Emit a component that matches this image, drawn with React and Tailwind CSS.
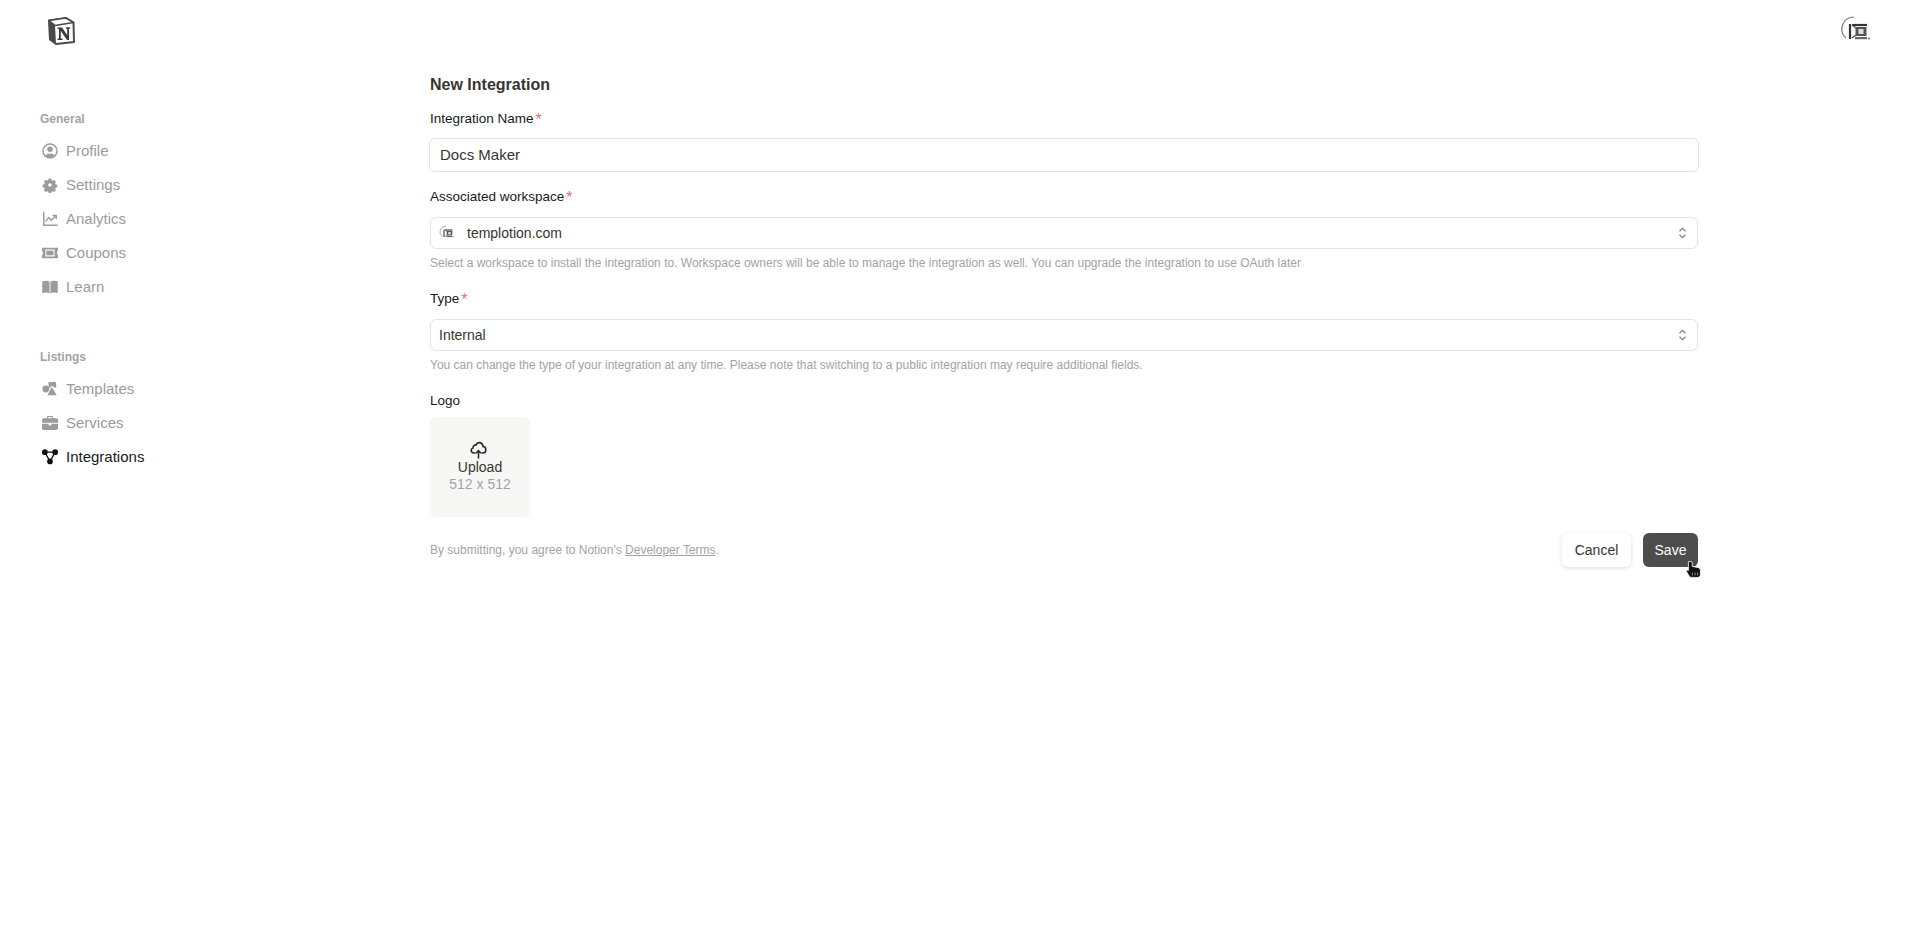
import React from "react";

const CubeLogo = () => (
  <svg width="29" height="30" viewBox="0 0 29 30" fill="none">
    <path d="M2 4.5 L19 2 L26.5 6.5 L27 26 L9 28 L3 23.5 Z" fill="#fff" stroke="#4a4a4a" strokeWidth="2" strokeLinejoin="round" />
    <path d="M2 4.5 L8 9.5 L9 28 L3 23.5 Z" fill="#4a4a4a" />
    <path d="M8 9.5 L26.5 6.5 L19 2 L2 4.5 Z" fill="#fff" stroke="#4a4a4a" strokeWidth="1.6" strokeLinejoin="round" />
    <path d="M10.5 11.5 H15 L20.2 19 V12.8 L18.8 12.5 V11.2 H23.2 V12.5 L22 12.8 V24 H20 L13.8 15 V22.3 L15.6 22.7 V24 H10.5 V22.7 L12 22.3 V12.9 L10.5 12.7 Z" fill="#3d3d3d" />
  </svg>
);

const Avatar = ({ small }) => (
  <svg width={small ? 16 : 32} height={small ? 16 : 32} viewBox="0 0 32 32" fill="none">
    <circle cx="16" cy="16" r="16" fill="#fff" />
    <path d="M14 2 A12 12 0 0 0 6 23" stroke="#777" strokeWidth="1.2" />
    <path d="M10 9 V24" stroke="#333" strokeWidth="2.2" />
    <path d="M12 10 H27" stroke="#333" strokeWidth="2.2" />
    <path d="M12 10 L16 13 M12 23 L16 20" stroke="#555" strokeWidth="1.4" />
    <rect x="15.5" y="12" width="11" height="9" fill="#555" />
    <rect x="18.5" y="14" width="5" height="5" fill="#ddd" />
    <rect x="15" y="22" width="12" height="2.2" fill="#666" />
    <circle cx="29" cy="23.5" r="0.9" fill="#555" />
  </svg>
);

const ProfileIcon = () => (
  <svg width="16" height="16" viewBox="0 0 18 18" fill="none">
    <circle cx="9" cy="9" r="7.9" stroke="currentColor" strokeWidth="1.6" />
    <circle cx="9" cy="7" r="3.1" fill="currentColor" />
    <path d="M3.6 14 C5 11 13 11 14.4 14 C12.5 16.6 5.5 16.6 3.6 14 Z" fill="currentColor" />
  </svg>
);

const GearIcon = () => (
  <svg width="16" height="16" viewBox="0 0 18 18">
    <path fillRule="evenodd" fill="currentColor" d="M7.4 1.5 h3.2 l.4 2 1.3.6 1.8-1 2.2 2.3-1 1.7.5 1.4 2 .4 v3.2 l-2 .4-.5 1.3 1 1.8-2.2 2.2-1.8-1-1.3.5-.4 1.9 H7.4 l-.4-1.9-1.3-.5-1.8 1-2.2-2.2 1-1.8-.5-1.3-2-.4 V8.6 l2-.4.5-1.4-1-1.7 2.2-2.3 1.8 1 1.3-.6 Z M9 7 a2.2 2.2 0 1 0 0 4.4 a2.2 2.2 0 1 0 0-4.4 Z" transform="translate(.6 .4) scale(.93)" />
  </svg>
);

const ChartIcon = () => (
  <svg width="16" height="16" viewBox="0 0 18 18" fill="none" stroke="currentColor" strokeWidth="1.6">
    <path d="M2 .8 V16 H17.5" />
    <path d="M4 12 L7.5 7.5 L10.5 10.5 L15.5 5.5" />
    <path d="M12 5 H16 V9" />
  </svg>
);

const TicketIcon = () => (
  <svg width="16" height="16" viewBox="0 0 18 18">
    <path fillRule="evenodd" fill="currentColor" d="M0 3 H18 V6.6 C16.6 7.2 16.6 10.8 18 11.4 V15 H0 V11.4 C1.4 10.8 1.4 7.2 0 6.6 Z M3.8 5.2 V12.8 H14.2 V5.2 Z" />
    <rect x="5" y="6.4" width="8" height="5.2" fill="currentColor" />
  </svg>
);

const BookIcon = () => (
  <svg width="16" height="16" viewBox="0 0 18 18" fill="currentColor">
    <path d="M.3 2.6 C3.2 1.6 6.6 1.9 8.5 3.2 V16.4 C6.6 15 3.2 14.8 .3 15.8 Z" />
    <path d="M17.7 2.6 C14.8 1.6 11.4 1.9 9.5 3.2 V16.4 C11.4 15 14.8 14.8 17.7 15.8 Z" />
  </svg>
);

const ShapesIcon = () => (
  <svg width="16" height="16" viewBox="0 0 18 18" fill="currentColor">
    <path d="M7 1.5 L15.5 .8 L16.2 8 L11 6 L8 8 Z" />
    <circle cx="4.4" cy="9" r="3.9" />
    <path d="M10.8 5.5 L17.4 16.6 H5.4 Z" stroke="#fff" strokeWidth="1" />
  </svg>
);

const BriefcaseIcon = () => (
  <svg width="16" height="16" viewBox="0 0 18 18">
    <path fill="currentColor" fillRule="evenodd" d="M5.6 3.6 V2 C5.6 1.4 6 1 6.6 1 H11.4 C12 1 12.4 1.4 12.4 2 V3.6 H15.8 C17 3.6 18 4.5 18 5.6 V8.6 H0 V5.6 C0 4.5 1 3.6 2.2 3.6 Z M7 2.3 V3.6 H11 V2.3 Z" />
    <path fill="currentColor" d="M0 9.8 H7.4 V11.4 H10.6 V9.8 H18 V15 C18 16 17 16.8 15.8 16.8 H2.2 C1 16.8 0 16 0 15 Z" />
  </svg>
);

const NodesIcon = () => (
  <svg width="16" height="16" viewBox="0 0 18 18" fill="#111">
    <path d="M3.2 3.6 H14.8 M3.2 3.6 L9 14 M14.8 3.6 L9 14" stroke="#111" strokeWidth="1.5" fill="none" />
    <circle cx="3.2" cy="3.6" r="3.2" />
    <circle cx="14.8" cy="3.6" r="3.2" />
    <circle cx="9" cy="14" r="3.2" />
  </svg>
);

const Chevrons = () => (
  <svg width="9" height="12" viewBox="0 0 10 14" fill="none" stroke="#808080" strokeWidth="1.5">
    <path d="M1.5 5 L5 1.5 L8.5 5" />
    <path d="M1.5 9 L5 12.5 L8.5 9" />
  </svg>
);

const CloudUpload = () => (
  <svg width="17" height="18" viewBox="0 0 17 18" fill="none" stroke="#2b2b2b" strokeWidth="1.6">
    <path d="M5.6 12 H4 C.8 12 .2 8 3 7 C3 4.4 5 3.6 6 4 C7.4 .4 12.6 .8 13 5.4 C16.8 5.8 16.8 12 13 12 H11.4" />
    <path d="M8.5 17.6 V10" />
    <path d="M6 12.2 L8.5 9.6 L11 12.2" />
  </svg>
);

const Pointer = () => (
  <svg width="15" height="17" viewBox="0 0 15 17">
    <path d="M2.6 .6 H5.4 C6 .6 6.2 1 6.2 1.6 V5.4 L11.5 6.4 C13.4 6.8 14.4 7.8 14.4 9.4 V13.6 C14.4 15.4 13.4 16.4 11.8 16.4 H5.4 C4.2 16.4 3.6 15.6 2.8 14.4 L.6 10.8 C.2 9.6 1.2 8.6 2.2 9.2 L2.4 9.4 V1 Z" fill="#111" stroke="#fff" strokeWidth=".8" />
    <path d="M6.4 14.4 V11.6 M9 14.4 V11.6 M11.6 14.4 V11.6" stroke="#aaa" strokeWidth=".8" />
  </svg>
);

const generalLinks = [
  { name: "Profile", icon: <ProfileIcon /> },
  { name: "Settings", icon: <GearIcon /> },
  { name: "Analytics", icon: <ChartIcon /> },
  { name: "Coupons", icon: <TicketIcon /> },
  { name: "Learn", icon: <BookIcon /> },
];

const listingLinks = [
  { name: "Templates", icon: <ShapesIcon /> },
  { name: "Services", icon: <BriefcaseIcon /> },
  { name: "Integrations", icon: <NodesIcon />, active: true },
];

function NavGroup({ title, links }) {
  return (
    <div>
      <div className="h-[16px] text-[12px] leading-[16px] font-bold text-[#a3a3a3]">{title}</div>
      <div className="mt-[7px] flex flex-col">
        {links.map(link => (
          <div
            key={link.name}
            className={link.active ? "h-[34px] flex items-center gap-[8px] text-[15px] text-[#191919]" : "h-[34px] flex items-center gap-[8px] text-[15px] text-[#9b9b9b]"}
          >
            <span className="ml-[2px] w-[16px] flex justify-center">{link.icon}</span>
            {link.name}
          </div>
        ))}
      </div>
    </div>
  );
}

function Label({ text, required }) {
  return (
    <div className="h-[20px] flex text-[13.5px] leading-[22px] text-[#191919]">
      <span>{text}</span>
      {required && <span className="ml-[2px] text-[16px] leading-[20px] translate-y-[2px] text-[#ee6b6b]">*</span>}
    </div>
  );
}

function SelectBox({ children }) {
  return (
    <div className="h-[32px] mt-[11px] pl-[8px] pr-[10px] flex items-center justify-between border border-[#e3e3e1] rounded-[6px] text-[14px] text-[#37352f]">
      <div className="flex items-center gap-[12px]">{children}</div>
      <Chevrons />
    </div>
  );
}

export default function App() {
  return (
    <div className="relative min-h-[925px] bg-white font-['Liberation_Sans',Arial,sans-serif]">
      <header className="h-[61px] pl-[47px] pr-[46px] flex items-center justify-between">
        <CubeLogo />
        <Avatar />
      </header>
      <div className="flex">
        <aside className="w-[430px] shrink-0 pl-[40px] pt-[50px] flex flex-col gap-[45px]">
          <NavGroup title="General" links={generalLinks} />
          <NavGroup title="Listings" links={listingLinks} />
        </aside>
        <main className="w-[1268px]">
          <h1 className="h-[24px] mt-[12px] text-[16px] leading-[24px] font-bold text-[#37352f]">New Integration</h1>
          <div className="mt-[11px]"><Label text="Integration Name" required /></div>
          <div className="h-[34px] mt-[10px] -mx-px px-[10px] flex items-center border border-[#e3e3e1] rounded-[6px] text-[15px] text-[#37352f]">Docs Maker</div>
          <div className="mt-[14px]"><Label text="Associated workspace" required /></div>
          <SelectBox>
            <Avatar small />
            <span>templotion.com</span>
          </SelectBox>
          <p className="h-[16px] mt-[6px] text-[12px] leading-[16px] text-[#a3a3a3]">
            Select a workspace to install the integration to. Workspace owners will be able to manage the integration as well. You can upgrade the integration to use OAuth later
          </p>
          <div className="mt-[17px]"><Label text="Type" required /></div>
          <SelectBox>
            <span>Internal</span>
          </SelectBox>
          <p className="h-[16px] mt-[6px] text-[12px] leading-[16px] text-[#a3a3a3]">
            You can change the type of your integration at any time. Please note that switching to a public integration may require additional fields.
          </p>
          <div className="mt-[17px]"><Label text="Logo" /></div>
          <div className="w-[100px] h-[100px] mt-[7px] flex flex-col items-center justify-center bg-[#f7f7f5] rounded-[6px] text-[14px] leading-[17px]">
            <span className="-ml-[3px] h-[18px]"><CloudUpload /></span>
            <span className="text-[#37352f]">Upload</span>
            <span className="text-[#a3a3a3]">512 x 512</span>
          </div>
          <div className="mt-[16px] flex items-center justify-between">
            <p className="text-[12px] text-[#a3a3a3]">
              By submitting, you agree to Notion's <span className="underline">Developer Terms</span>.
            </p>
            <div className="relative flex gap-[12px]">
              <button className="w-[69px] h-[34px] bg-white rounded-[6px] text-[14px] text-[#37352f] shadow-[0_1px_4px_rgba(0,0,0,0.14)]">Cancel</button>
              <button className="w-[55px] h-[34px] bg-[#4d4d4d] rounded-[6px] text-[14px] text-white">Save</button>
              <span className="absolute right-[-3px] top-[28px]"><Pointer /></span>
            </div>
          </div>
        </main>
      </div>
    </div>
  );
}
